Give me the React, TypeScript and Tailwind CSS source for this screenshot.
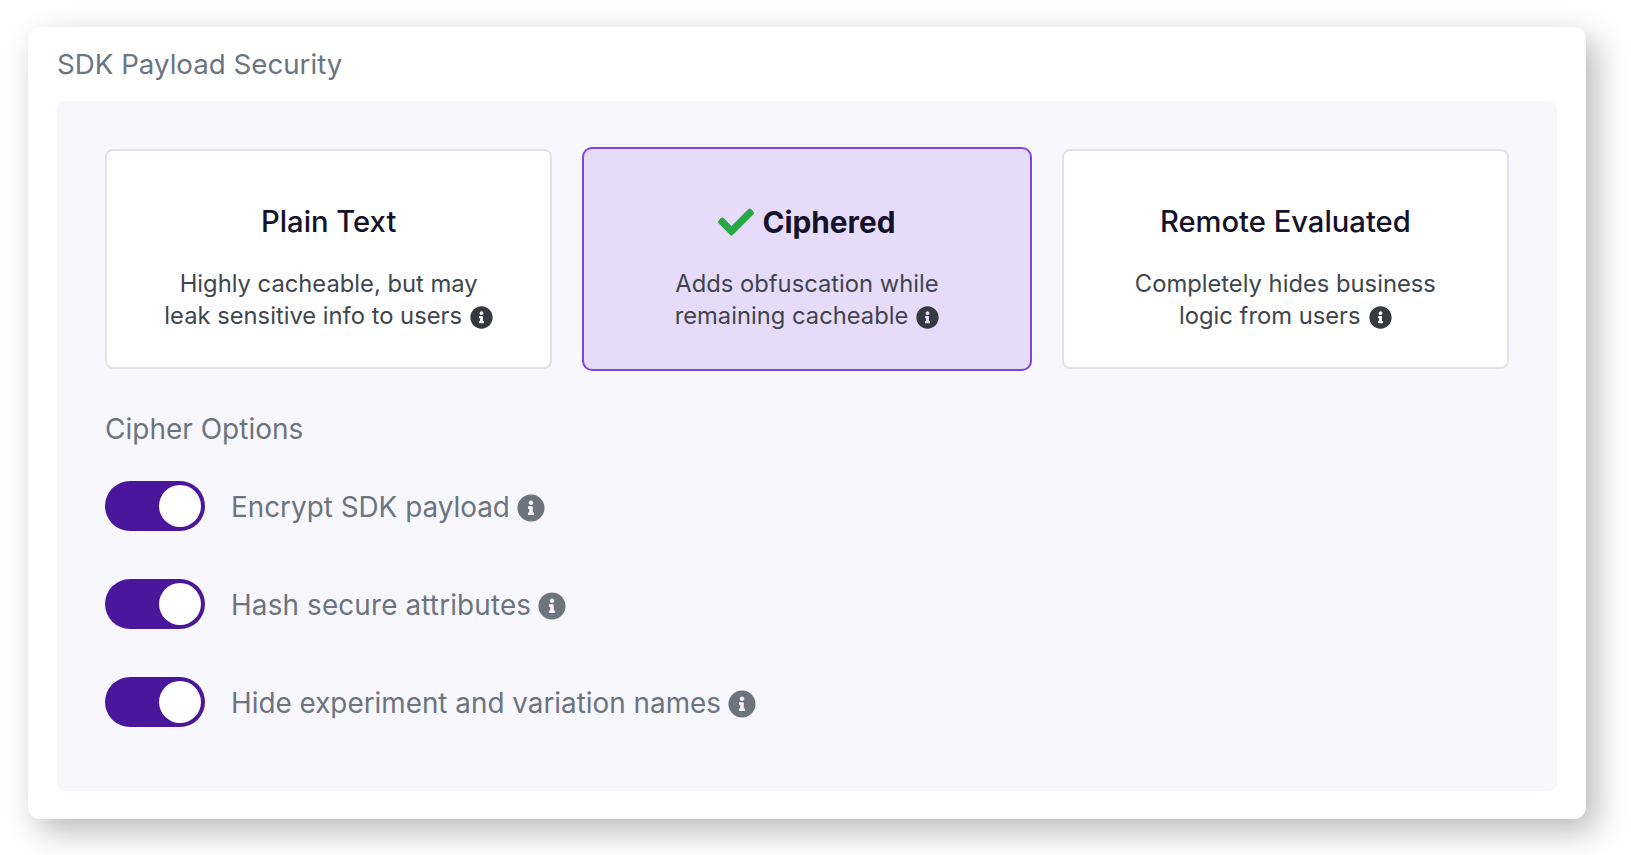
import React from "react";
import { FaCheck, FaInfoCircle } from "react-icons/fa";

function Option({ title, lines, selected }: { title: string; lines: [string, string]; selected?: boolean }) {
  return (
    <div
      className={
        selected
          ? "flex flex-col items-center justify-center rounded-[10px] border-2 border-[#7c45e0] bg-[#e6dcfa] -mx-px -my-[2px] pt-[12px]"
          : "flex flex-col items-center justify-center rounded-[8px] border-2 border-[#dfe3e7] bg-white pt-[12px]"
      }
    >
      <div className={selected ? "flex items-center pt-[1px] text-[29.8px] leading-[44px] font-bold text-[#15112b]" : "flex items-center pt-[1px] text-[29.2px] leading-[44px] font-medium text-[#15112b]"}>
        {selected && <FaCheck className="mr-[8px] h-[36px] w-[36px] text-[#28a745]" />}
        {title}
      </div>
      <div className="mt-[24px] text-center text-[23.75px] leading-[32px] text-[#40454d]">
        <div>{lines[0]}</div>
        <div className="flex items-center justify-center">
          {lines[1]}
          <FaInfoCircle className="ml-[8px] mt-[3px] h-[23px] w-[23px] text-[#343a40]" />
        </div>
      </div>
    </div>
  );
}

function Toggle({ label, wide }: { label: string; wide?: boolean }) {
  return (
    <div className="flex h-[50px] items-center">
      <div className="flex h-[50px] w-[100px] items-center justify-end rounded-full bg-[#4a169c] pr-[4px]">
        <div className="h-[42px] w-[42px] rounded-full bg-white" />
      </div>
      <span className={wide ? "ml-[26px] pt-[2px] text-[27.85px] leading-[40px] tracking-[0.15px] text-[#6b747f]" : "ml-[26px] pt-[2px] text-[27.85px] leading-[40px] text-[#6b747f]"}>{label}</span>
      <FaInfoCircle className="ml-[7px] mt-[4px] h-[28px] w-[28px] text-[#6c757d]" />
    </div>
  );
}

export default function App() {
  return (
    <div className="h-[855px] w-[1631px] overflow-hidden bg-white font-['Inter',sans-serif] antialiased">
      <div className="pl-[28px] pt-[27px]">
        <div className="flex h-[792px] w-[1558px] flex-col rounded-[12px] bg-white px-[29px] pb-[28px] shadow-[10px_12px_32px_rgba(0,0,0,0.28)]">
          <div className="flex h-[74px] items-center pt-[2px] text-[27.7px] text-[#6b747f]">SDK Payload Security</div>
          <div className="flex-1 rounded-[8px] bg-[#f8f7fd] px-[48px] pt-[48px]">
            <div className="grid h-[220px] grid-cols-3 gap-[31px]">
              <Option title="Plain Text" lines={["Highly cacheable, but may", "leak sensitive info to users"]} />
              <Option selected title="Ciphered" lines={["Adds obfuscation while", "remaining cacheable"]} />
              <Option title="Remote Evaluated" lines={["Completely hides business", "logic from users"]} />
            </div>
            <div className="mt-[40px] text-[28px] leading-[40px] text-[#6b747f]">Cipher Options</div>
            <div className="mt-[32px] flex flex-col gap-[48px]">
              <Toggle label="Encrypt SDK payload" />
              <Toggle wide label="Hash secure attributes" />
              <Toggle label="Hide experiment and variation names" />
            </div>
          </div>
        </div>
      </div>
    </div>
  );
}
